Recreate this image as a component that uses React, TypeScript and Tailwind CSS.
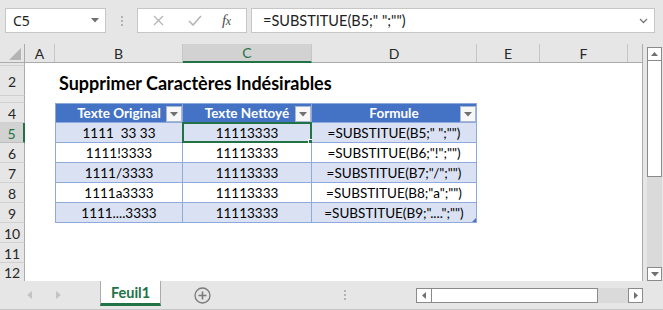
import React from "react"

const calibri = "font-['Lato','Liberation_Sans',sans-serif]"

const rows = [
  { n: 5, orig: "1111  33 33", formula: '=SUBSTITUE(B5;" ";"")', band: true },
  { n: 6, orig: "1111!3333", formula: '=SUBSTITUE(B6;"!";"")', band: false },
  { n: 7, orig: "1111/3333", formula: '=SUBSTITUE(B7;"/";"")', band: true },
  { n: 8, orig: "1111a3333", formula: '=SUBSTITUE(B8;"a";"")', band: false },
  { n: 9, orig: "1111....3333", formula: '=SUBSTITUE(B9;"....";"")', band: true },
]

function Caret({ className = "" }: { className?: string }) {
  return (
    <svg width="8" height="5" viewBox="0 0 8 5" className={className}>
      <path d="M0 0h8L4 4.5z" fill="#707070" />
    </svg>
  )
}

function FilterBtn() {
  return (
    <div className="absolute right-0 bottom-0 w-[16px] h-[16px] bg-[#f7f7f7] border border-[#a9b7d0] flex items-center justify-center">
      <svg width="8" height="5" viewBox="0 0 8 5">
        <path d="M0 0h8L4 4.5z" fill="#707070" />
      </svg>
    </div>
  )
}

function RowHead({ n, selected }: { n?: number; selected?: boolean }) {
  return (
    <div
      className={
        selected
          ? "w-[25px] shrink-0 h-full bg-[#d2d2d2] border-r-2 border-r-[#217346] border-b border-b-[#bdbdbd] flex items-center justify-center pt-[1px] text-[#217346] text-[14px]"
          : "w-[25px] shrink-0 h-full bg-[#e6e6e6] border-r border-r-[#ababab] border-b border-b-[#d0d0d0] flex items-center justify-center pt-[1px] text-[#262626] text-[14px]"
      }
    >
      {n}
    </div>
  )
}

function FormulaBar() {
  return (
    <div className="h-[44px] shrink-0 flex items-start pt-[8px] pl-[5px] pr-[8px]">
      <div className="w-[101px] h-[25px] bg-white border border-[#c6c6c6] flex items-center justify-between pl-[7px] pr-[6px]">
        <span className="text-[14px] text-[#222] font-['Noto_Sans',sans-serif]">C5</span>
        <Caret />
      </div>
      <div className="w-[31px] h-[25px] flex flex-col items-center justify-center gap-[2px]">
        <div className="w-[2px] h-[2px] bg-[#b3b3b3]" />
        <div className="w-[2px] h-[2px] bg-[#b3b3b3]" />
        <div className="w-[2px] h-[2px] bg-[#b3b3b3]" />
      </div>
      <div className="w-[110px] h-[25px] bg-white border border-[#c6c6c6] flex items-center pl-[15px]">
        <svg width="11" height="11" viewBox="0 0 11 11">
          <path d="M1 1l9 9M10 1l-9 9" stroke="#b5b5b5" strokeWidth="1.3" />
        </svg>
        <svg width="14" height="11" viewBox="0 0 14 11" className="ml-[24px]">
          <path d="M1 6l4 4 8-9" stroke="#b5b5b5" strokeWidth="1.6" fill="none" />
        </svg>
        <span className="ml-[20px] font-['Liberation_Serif',serif] italic text-[15px] text-[#4d4d4d] tracking-[-0.5px]">
          f<span className="text-[12px]">x</span>
        </span>
      </div>
      <div className="flex-1 ml-[4px] h-[25px] bg-white border border-[#c6c6c6] flex items-center justify-between pl-[11px] pr-[6px]">
        <span className={`${calibri} text-[14.5px] text-[#222] whitespace-pre`}>=SUBSTITUE(B5;" ";"")</span>
        <svg width="9" height="6" viewBox="0 0 9 6">
          <path d="M1 1l3.5 3.5L8 1" stroke="#777" strokeWidth="1.3" fill="none" />
        </svg>
      </div>
    </div>
  )
}

function Sheet() {
  return (
    <div className={`${calibri} w-[643px] shrink-0 flex flex-col border-r border-[#ababab] bg-white`}>
      {/* column headers */}
      <div className="h-[19px] shrink-0 flex bg-[#e6e6e6] border-b border-[#ababab] text-[14px] text-[#262626]">
        <div className="w-[25px] shrink-0 h-full border-r border-[#ababab] flex items-end justify-end pr-[3px] pb-[2px]">
          <svg width="12" height="12" viewBox="0 0 12 12">
            <path d="M12 0v12H0z" fill="#b4b4b4" />
          </svg>
        </div>
        <div className="w-[30px] shrink-0 border-r border-[#c6c6c6] flex items-center justify-center">A</div>
        <div className="w-[128px] shrink-0 border-r border-[#c6c6c6] flex items-center justify-center">B</div>
        <div className="w-[129px] shrink-0 bg-[#d2d2d2] border-r border-[#c6c6c6] border-b-2 border-b-[#217346] flex items-center justify-center text-[#217346] -mb-px">C</div>
        <div className="w-[165px] shrink-0 border-r border-[#c6c6c6] flex items-center justify-center">D</div>
        <div className="w-[63px] shrink-0 border-r border-[#c6c6c6] flex items-center justify-center">E</div>
        <div className="w-[88px] shrink-0 border-r border-[#c6c6c6] flex items-center justify-center">F</div>
        <div className="flex-1" />
      </div>

      {/* row 1 (clipped) */}
      <div className="h-[3px] flex overflow-hidden">
        <div className="w-[25px] shrink-0 h-full bg-[#e6e6e6] border-r border-[#ababab] border-b border-b-[#d0d0d0]" />
      </div>

      {/* row 2: title */}
      <div className="h-[30px] flex">
        <RowHead n={2} />
        <div className="w-[30px] shrink-0" />
        <div className="flex-1 flex items-end pl-[4px] pb-[4px] text-[18px] font-bold text-black leading-none whitespace-nowrap">
          Supprimer Caractères Indésirables
        </div>
      </div>

      {/* row 3 (clipped) */}
      <div className="h-[7px] flex overflow-hidden">
        <div className="w-[25px] shrink-0 h-full bg-[#e6e6e6] border-r border-[#ababab] border-b border-b-[#d0d0d0]" />
      </div>

      {/* row 4: table header */}
      <div className="h-[20px] flex">
        <RowHead n={4} />
        <div className="w-[30px] shrink-0" />
        <div className="relative w-[128px] shrink-0 bg-[#4472c4] border border-[#8ea9db] flex items-center justify-center text-white font-bold text-[13.5px]">
          Texte Original
          <FilterBtn />
        </div>
        <div className="relative w-[129px] shrink-0 bg-[#4472c4] border-y border-r border-[#8ea9db] flex items-center justify-center text-white font-bold text-[13.5px]">
          Texte Nettoyé
          <FilterBtn />
        </div>
        <div className="relative w-[165px] shrink-0 bg-[#4472c4] border-y border-r border-[#8ea9db] flex items-center justify-center text-white font-bold text-[13.5px]">
          Formule
          <FilterBtn />
        </div>
      </div>

      {rows.map((r) => (
        <div key={r.n} className="h-[20px] flex">
          <RowHead n={r.n} selected={r.n === 5} />
          <div className="w-[30px] shrink-0" />
          <div
            className={`w-[128px] shrink-0 border-x border-b border-[#8ea9db] flex items-center justify-center pt-[1px] text-[13.5px] text-black whitespace-pre ${r.band ? "bg-[#d9e1f2]" : "bg-white"}`}
          >
            {r.orig}
          </div>
          <div
            className={`relative w-[129px] shrink-0 border-r border-b border-[#8ea9db] flex items-center justify-center pt-[1px] text-[13.5px] text-black ${r.band ? "bg-[#d9e1f2]" : "bg-white"}`}
          >
            11113333
            {r.n === 5 && (
              <div className="absolute -left-[1px] -top-[1px] -right-[1px] -bottom-[1px] border-2 border-[#217346]">
                <div className="absolute -right-[4px] -bottom-[4px] w-[6px] h-[6px] bg-[#217346] border border-white" />
              </div>
            )}
          </div>
          <div
            className={`relative w-[165px] shrink-0 border-r border-b border-[#8ea9db] flex items-center justify-center pt-[1px] text-[13.5px] text-black whitespace-pre ${r.band ? "bg-[#d9e1f2]" : "bg-white"}`}
          >
            {r.formula}
            {r.n === 9 && (
              <svg width="4" height="4" viewBox="0 0 4 4" className="absolute right-0 bottom-0">
                <path d="M4 0v4H0z" fill="#4472c4" />
              </svg>
            )}
          </div>
        </div>
      ))}

      {[10, 11].map((n) => (
        <div key={n} className="h-[20px] flex">
          <RowHead n={n} />
        </div>
      ))}

      {/* row 12 (clipped) */}
      <div className="h-[18px] flex overflow-hidden">
        <div className="w-[25px] shrink-0 h-full bg-[#e6e6e6] border-r border-[#ababab] flex items-start justify-center text-[14px] text-[#262626]">
          <span className="leading-[20px]">12</span>
        </div>
      </div>
    </div>
  )
}

function VScroll() {
  return (
    <div className="flex-1 flex flex-col pt-[3px] pl-[4px] pr-[1px]">
      <div className="h-[14px] bg-white border border-[#8a8a8a] flex items-center justify-center">
        <svg width="7" height="4" viewBox="0 0 7 4">
          <path d="M0 4h7L3.5 0z" fill="#707070" />
        </svg>
      </div>
      <div className="h-[116px] bg-white border-x border-b border-[#8a8a8a]" />
      <div className="flex-1 bg-[#dadada]" />
      <div className="h-[14px] bg-white border border-[#8a8a8a] flex items-center justify-center">
        <Caret />
      </div>
    </div>
  )
}

function TabBar() {
  return (
    <div className="h-[29px] shrink-0 flex items-start border-b border-[#c6c6c6]">
      <div className="w-[100px] h-[28px] flex items-center">
        <svg width="5" height="8" viewBox="0 0 5 8" className="ml-[27px]">
          <path d="M5 0v8L0 4z" fill="#c3c3c3" />
        </svg>
        <svg width="5" height="8" viewBox="0 0 5 8" className="ml-[24px]">
          <path d="M0 0v8l5-4z" fill="#c3c3c3" />
        </svg>
      </div>
      <div className="w-[61px] h-[25px] bg-white border-x border-[#ababab] border-b-[3px] border-b-[#217346] flex items-center justify-center pt-[2px] text-[#217346] font-bold text-[14.5px] font-['Lato',sans-serif]">
        Feuil1
      </div>
      <div className="w-[82px] h-[28px] flex items-center justify-center">
        <svg width="17" height="17" viewBox="0 0 17 17" className="mt-[1px]">
          <circle cx="8.5" cy="8.5" r="7.5" fill="none" stroke="#7a7a7a" strokeWidth="1.3" />
          <path d="M8.5 4.5v8M4.5 8.5h8" stroke="#7a7a7a" strokeWidth="1.6" />
        </svg>
      </div>
      <div className="w-[173px] h-[28px] flex flex-col items-center justify-center gap-[2px] pl-[31px]">
        <div className="w-[2px] h-[2px] bg-[#b3b3b3]" />
        <div className="w-[2px] h-[2px] bg-[#b3b3b3]" />
        <div className="w-[2px] h-[2px] bg-[#b3b3b3]" />
      </div>
      <div className="w-[227px] h-[15px] mt-[7px] flex">
        <div className="w-[16px] h-full bg-white border border-[#8a8a8a] flex items-center justify-center">
          <svg width="4" height="7" viewBox="0 0 4 7">
            <path d="M4 0v7L0 3.5z" fill="#707070" />
          </svg>
        </div>
        <div className="w-[166px] h-full bg-white border-y border-r border-[#8a8a8a]" />
        <div className="flex-1 bg-[#dadada]" />
        <div className="w-[15px] h-full bg-white border border-[#8a8a8a] flex items-center justify-center">
          <svg width="4" height="7" viewBox="0 0 4 7">
            <path d="M0 0v7l4-3.5z" fill="#707070" />
          </svg>
        </div>
      </div>
    </div>
  )
}

export default function App() {
  return (
    <div className="w-[663px] h-[310px] overflow-hidden bg-[#e6e6e6] flex flex-col">
      <FormulaBar />
      <div className="h-[237px] shrink-0 flex">
        <Sheet />
        <VScroll />
      </div>
      <TabBar />
    </div>
  )
}
